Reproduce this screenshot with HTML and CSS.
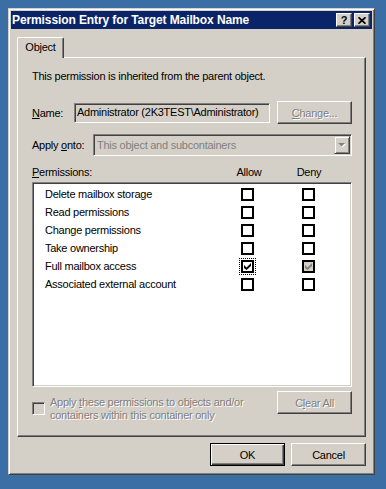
FILE: index.html
```html
<!DOCTYPE html>
<html lang="en">
<head>
  <meta charset="UTF-8" />
  <title>Permission Entry for Target Mailbox Name</title>
  <link rel="stylesheet" href="styles.css">
</head>
<body>
  <div class="dialog">
    <div class="titlebar">
      <span class="title">Permission Entry for Target Mailbox Name</span>
      <span class="caption-btn help">?</span>
      <span class="caption-btn close">
        <svg width="8" height="7" viewBox="0 0 8 7"><path d="M0.5 0.3 L7.5 6.7 M7.5 0.3 L0.5 6.7" stroke="#000" stroke-width="1.7" fill="none"/></svg>
      </span>
    </div>

    <div class="client">
      <div class="tabs">
        <div class="tab">Object</div>
      </div>

      <div class="panel">
        <p class="info">This permission is inherited from the parent object.</p>

        <div class="field-row name-row">
          <span class="name-label"><u>N</u>ame:</span>
          <div class="textbox">Administrator (2K3TEST\Administrator)</div>
          <button class="btn disabled"><u>C</u>hange...</button>
        </div>

        <div class="field-row apply-row">
          <span class="apply-label">Apply <u>o</u>nto:</span>
          <div class="combo">
            <span class="combo-text">This object and subcontainers</span>
            <span class="combo-arrow">
              <svg width="8" height="5" viewBox="0 0 8 5"><polygon points="1,1 8,1 4.5,4.5" fill="#fff"/><polygon points="0,0 7,0 3.5,3.5" fill="#808080"/></svg>
            </span>
          </div>
        </div>

        <div class="perm-header">
          <span><u>P</u>ermissions:</span>
          <span class="col">Allow</span>
          <span class="col">Deny</span>
        </div>

        <div class="listbox">
          <div class="row"><span>Delete mailbox storage</span><span class="cb"></span><span class="cb"></span></div>
          <div class="row"><span>Read permissions</span><span class="cb"></span><span class="cb"></span></div>
          <div class="row"><span>Change permissions</span><span class="cb"></span><span class="cb"></span></div>
          <div class="row"><span>Take ownership</span><span class="cb"></span><span class="cb"></span></div>
          <div class="row">
            <span>Full mailbox access</span>
            <span class="cb focus"><svg width="7" height="7" viewBox="0 0 7 7"><path d="M0 2 L2.5 4.5 L7 0 L7 3 L2.5 7 L0 5 Z" fill="#000"/></svg></span>
            <span class="cb grey"><svg width="7" height="7" viewBox="0 0 7 7"><path d="M0 2 L2.5 4.5 L7 0 L7 3 L2.5 7 L0 5 Z" fill="#808080"/></svg></span>
          </div>
          <div class="row"><span>Associated external account</span><span class="cb"></span><span class="cb"></span></div>
        </div>

        <div class="bottom-row">
          <div class="apply-check">
            <span class="check-sunken"></span>
            <span class="check-label disabled">Apply <u>t</u>hese permissions to objects and/or<br>containers within this container only</span>
          </div>
          <button class="btn disabled">C<u>l</u>ear All</button>
        </div>
      </div>

      <div class="actions">
        <button class="btn default">OK</button>
        <button class="btn">Cancel</button>
      </div>
    </div>
  </div>
</body>
</html>
```

FILE: styles.css
```css
* {
  box-sizing: border-box;
}

body {
  margin: 0;
  background: #3a6ea5;
  font-family: "Liberation Sans", Tahoma, sans-serif;
  font-size: 11px;
  letter-spacing: -0.25px;
  color: #000;
}

.dialog {
  width: 367px;
  height: 467px;
  margin: 8px 0 0 8px;
  padding: 2px;
  background: #d4d0c8;
  border: 1px solid;
  border-color: #d4d0c8 #404040 #404040 #d4d0c8;
  box-shadow: inset 1px 1px #fff, inset -1px -1px #808080;
}

/* title bar */
.titlebar {
  height: 18px;
  display: flex;
  align-items: center;
  padding: 0 2px 0 1px;
  background: #0a246a;
  color: #fff;
  font-weight: bold;
}

.title {
  flex: 1;
  white-space: nowrap;
  font-size: 12px;
  letter-spacing: -0.1px;
}

.caption-btn {
  width: 16px;
  height: 14px;
  display: flex;
  align-items: center;
  justify-content: center;
  background: #d4d0c8;
  color: #000;
  border: 1px solid;
  border-color: #fff #404040 #404040 #fff;
  box-shadow: inset -1px -1px #808080;
  font-size: 11px;
  line-height: 1;
  letter-spacing: 0;
}

.help {
  margin-right: 2px;
}

/* client area */
.client {
  padding: 8px 6px 0 6px;
}

.tabs {
  display: flex;
}

.tab {
  position: relative;
  z-index: 1;
  width: 47px;
  height: 21px;
  margin-bottom: -1px;
  background: #d4d0c8;
  border-top: 1px solid #fff;
  border-left: 1px solid #fff;
  border-right: 1px solid #404040;
  border-radius: 2px 2px 0 0;
  box-shadow: inset -1px 0 #808080;
  text-align: center;
  line-height: 19px;
}

.panel {
  height: 380px;
  padding: 0 13px 0 14px;
  border: 1px solid;
  border-color: #fff #404040 #404040 #fff;
  box-shadow: inset -1px -1px #808080;
}

.info {
  margin: 12px 0 0;
  line-height: 13px;
}

.field-row {
  display: flex;
  align-items: center;
  white-space: nowrap;
}

.name-row {
  height: 23px;
  margin-top: 18px;
}

.name-label {
  width: 42px;
}

.apply-row {
  height: 22px;
  margin-top: 10px;
}

.apply-label {
  width: 61px;
}

.textbox {
  width: 196px;
  height: 20px;
  padding-left: 2px;
  line-height: 17px;
  overflow: hidden;
  background: #d4d0c8;
  border: 1px solid;
  border-color: #808080 #fff #fff #808080;
  box-shadow: inset 1px 1px #404040, inset -1px -1px #d4d0c8;
}

.combo {
  flex: 1;
  height: 22px;
  display: flex;
  padding: 1px;
  background: #d4d0c8;
  border: 1px solid;
  border-color: #808080 #fff #fff #808080;
  box-shadow: inset 1px 1px #404040, inset -1px -1px #d4d0c8;
}

.combo-text {
  flex: 1;
  padding-left: 2px;
  line-height: 18px;
  color: #808080;
}

.combo-arrow {
  width: 16px;
  height: 18px;
  display: flex;
  align-items: center;
  justify-content: center;
  border: 1px solid;
  border-color: #d4d0c8 #404040 #404040 #d4d0c8;
  box-shadow: inset 1px 1px #fff, inset -1px -1px #808080;
}

/* buttons */
.btn {
  width: 75px;
  height: 23px;
  margin-left: auto;
  padding: 0;
  font: inherit;
  letter-spacing: inherit;
  color: #000;
  background: #d4d0c8;
  border: 1px solid;
  border-color: #fff #404040 #404040 #fff;
  box-shadow: inset -1px -1px #808080;
  text-align: center;
}

.btn.default {
  border-color: #000;
  box-shadow: inset 1px 1px #fff, inset -1px -1px #404040, inset -2px -2px #808080;
}

.disabled {
  color: #808080;
  text-shadow: 1px 1px #fff;
}

/* permissions list */
.perm-header {
  display: grid;
  grid-template-columns: 187px 60px 60px;
  margin-top: 10px;
  line-height: 13px;
}

.perm-header .col {
  text-align: center;
}

.listbox {
  height: 205px;
  margin-top: 3px;
  padding: 2px 0 0 12px;
  background: #fff;
  border: 1px solid;
  border-color: #808080 #fff #fff #808080;
  box-shadow: inset 1px 1px #404040, inset -1px -1px #d4d0c8;
}

.row {
  display: grid;
  grid-template-columns: 196px 61px auto;
  align-items: center;
  height: 18px;
}

.cb {
  width: 13px;
  height: 13px;
  display: flex;
  align-items: center;
  justify-content: center;
  background: #fff;
  border: 2px solid #000;
}

.cb.grey {
  background: #d4d0c8;
}

.cb.focus {
  outline: 1px dotted #000;
  outline-offset: 1px;
}

.bottom-row {
  display: flex;
  align-items: flex-start;
  margin-top: 4px;
}

.apply-check {
  display: flex;
  align-items: flex-start;
}

.check-sunken {
  width: 13px;
  height: 13px;
  margin-top: 11px;
  background: #d4d0c8;
  border: 1px solid;
  border-color: #808080 #fff #fff #808080;
  box-shadow: inset 1px 1px #404040, inset -1px -1px #d4d0c8;
}

.check-label {
  margin: 5px 0 0 5px;
  line-height: 13px;
  white-space: nowrap;
}

.actions {
  display: flex;
  justify-content: flex-end;
  gap: 6px;
  margin-top: 6px;
}

.actions .btn {
  margin-left: 0;
}
```
